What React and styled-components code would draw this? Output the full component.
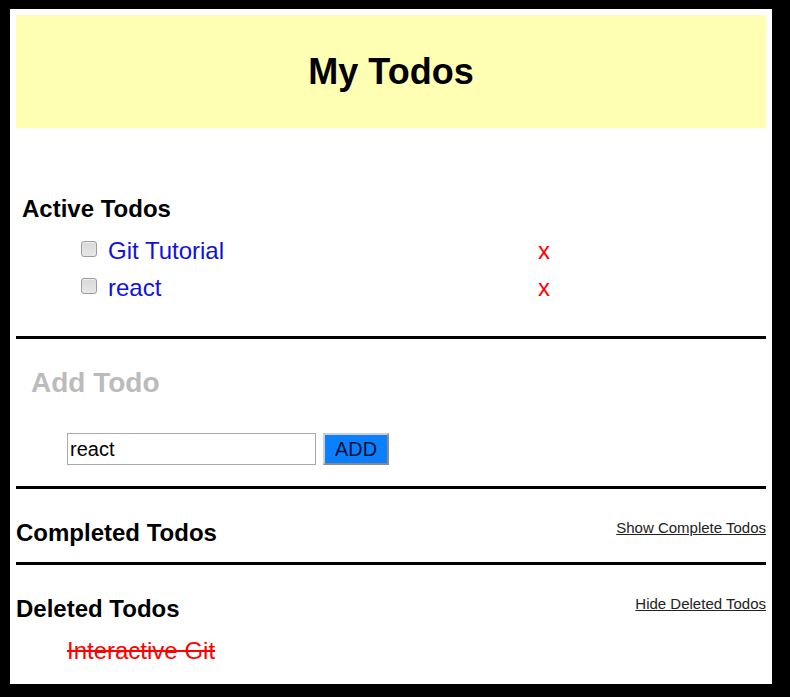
import React, { useState } from "react";
import styled, { createGlobalStyle } from "styled-components";

const GlobalStyle = createGlobalStyle`
  body {
    margin: 0;
    background: #000;
    font-family: "Liberation Sans", Arial, sans-serif;
  }
`;

const Frame = styled.div`
  box-sizing: border-box;
  margin: 9px 18px 0 10px;
  height: 675px;
  padding: 6px;
  background: #fff;
`;

const Header = styled.header`
  height: 113px;
  display: flex;
  align-items: center;
  justify-content: center;
  background: #ffffb3;
`;

const Title = styled.h1`
  margin: 0;
  font-size: 36px;
  font-weight: bold;
  color: #000;
`;

const Section = styled.section`
  padding: ${({ pad }) => pad || "0"};
`;

const Heading = styled.h2`
  margin: 0;
  font-size: 24px;
  line-height: 26px;
  font-weight: bold;
  color: ${({ muted }) => (muted ? "#bbb" : "#000")};
  ${({ big }) => big && "font-size: 28px; line-height: 32px;"}
`;

const Divider = styled.div`
  height: 3px;
  background: #000;
`;

const TodoList = styled.ul`
  list-style: none;
  margin: 11px 0 0;
  padding: 0 0 0 59px;
`;

const TodoRow = styled.li`
  display: flex;
  align-items: flex-start;
  height: 37px;
  font-size: 24px;
  line-height: 36px;
`;

const Check = styled.input`
  appearance: none;
  box-sizing: border-box;
  width: 16px;
  height: 16px;
  margin: 8px 11px 0 0;
  border: 1px solid #9c9c9c;
  border-radius: 3px;
  background: linear-gradient(#d8d8d8, #e8e8e8);
  box-shadow: inset 0 1px 1px rgba(255, 255, 255, 0.6);
  flex: none;
`;

const TodoText = styled.span`
  width: 430px;
  color: #1111dd;
`;

const Remove = styled.span`
  color: #f00;
  cursor: pointer;
`;

const AddForm = styled.form`
  display: flex;
  gap: 7px;
  margin: 34px 0 0 36px;
`;

const TextInput = styled.input`
  box-sizing: border-box;
  width: 249px;
  height: 32px;
  padding: 0 2px;
  border: 1px solid #a9a9a9;
  font-family: inherit;
  font-size: 20px;
  color: #000;
  outline: none;
`;

const AddButton = styled.button`
  box-sizing: border-box;
  width: 66px;
  height: 32px;
  padding: 0;
  border: 2px solid;
  border-color: #cfcfcf #8a8a8a #8a8a8a #cfcfcf;
  background: #0a80ff;
  font-family: inherit;
  font-size: 20px;
  color: #111133;
`;

const SectionHead = styled.div`
  display: flex;
  justify-content: space-between;
  align-items: flex-start;
`;

const ToggleLink = styled.a`
  margin-top: -1px;
  font-size: 15px;
  line-height: 17px;
  color: #222;
  text-decoration: underline;
  cursor: pointer;
`;

const DeletedList = styled.ul`
  list-style: none;
  margin: 14px 0 0;
  padding: 0 0 0 51px;
`;

const DeletedItem = styled.li`
  font-size: 24px;
  line-height: 30px;
  color: #f00;
  text-decoration: line-through;
`;

export default function App() {
  const [text, setText] = useState("react");
  const active = ["Git Tutorial", "react"];
  const deleted = ["Interactive Git"];

  return (
    <>
      <GlobalStyle />
      <Frame>
        <Header>
          <Title>My Todos</Title>
        </Header>

        <Section pad="68px 0 29px 6px">
          <Heading>Active Todos</Heading>
          <TodoList>
            {active.map((t) => (
              <TodoRow key={t}>
                <Check type="checkbox" />
                <TodoText>{t}</TodoText>
                <Remove>x</Remove>
              </TodoRow>
            ))}
          </TodoList>
        </Section>
        <Divider />

        <Section pad="28px 0 21px 15px">
          <Heading muted big>Add Todo</Heading>
          <AddForm onSubmit={(e) => e.preventDefault()}>
            <TextInput value={text} onChange={(e) => setText(e.target.value)} />
            <AddButton type="submit">ADD</AddButton>
          </AddForm>
        </Section>
        <Divider />

        <Section pad="31px 0 16px 0">
          <SectionHead>
            <Heading>Completed Todos</Heading>
            <ToggleLink>Show Complete Todos</ToggleLink>
          </SectionHead>
        </Section>
        <Divider />

        <Section pad="31px 0 0 0">
          <SectionHead>
            <Heading>Deleted Todos</Heading>
            <ToggleLink>Hide Deleted Todos</ToggleLink>
          </SectionHead>
          <DeletedList>
            {deleted.map((t) => (
              <DeletedItem key={t}>{t}</DeletedItem>
            ))}
          </DeletedList>
        </Section>
      </Frame>
    </>
  );
}
